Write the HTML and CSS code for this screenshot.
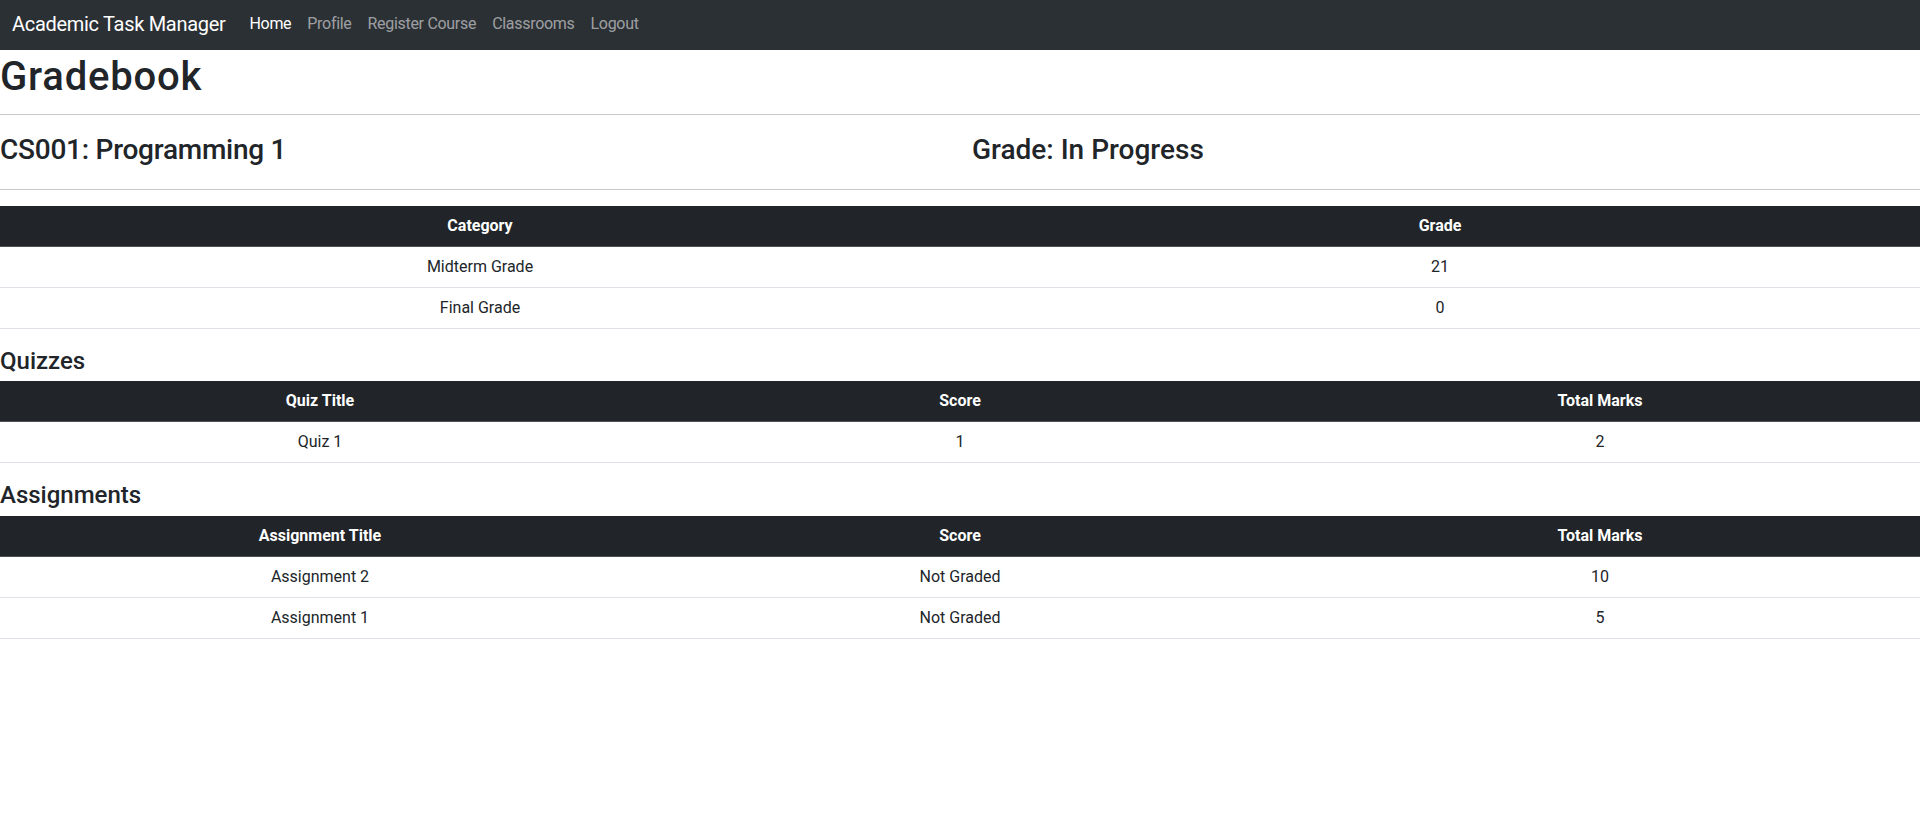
FILE: index.html
```html
<!DOCTYPE html>
<html lang="en">
<head>
<meta charset="utf-8">
<title>Gradebook - Academic Task Manager</title>
<link rel="stylesheet" href="styles.css">
</head>
<body>
<nav class="navbar">
  <div class="navbar-inner">
    <a class="brand" href="#">Academic Task Manager</a>
    <ul class="nav-list">
      <li><a class="nav-link active" href="#">Home</a></li>
      <li><a class="nav-link" href="#">Profile</a></li>
      <li><a class="nav-link" href="#">Register Course</a></li>
      <li><a class="nav-link" href="#">Classrooms</a></li>
      <li><a class="nav-link" href="#">Logout</a></li>
    </ul>
  </div>
</nav>
<main class="page">
  <h1 class="page-title">Gradebook</h1>
  <hr class="divider">
  <div class="summary-row">
    <div class="summary-col"><h3 class="summary-title course">CS001: Programming 1</h3></div>
    <div class="summary-col"><h3 class="summary-title">Grade: In Progress</h3></div>
  </div>
  <hr class="divider">
  <table class="grade-table">
    <thead>
      <tr><th>Category</th><th>Grade</th></tr>
    </thead>
    <tbody>
      <tr><td>Midterm Grade</td><td>21</td></tr>
      <tr><td>Final Grade</td><td>0</td></tr>
    </tbody>
  </table>
  <h4 class="section-title">Quizzes</h4>
  <table class="grade-table">
    <thead>
      <tr><th>Quiz Title</th><th>Score</th><th>Total Marks</th></tr>
    </thead>
    <tbody>
      <tr><td>Quiz 1</td><td>1</td><td>2</td></tr>
    </tbody>
  </table>
  <h4 class="section-title">Assignments</h4>
  <table class="grade-table">
    <thead>
      <tr><th>Assignment Title</th><th>Score</th><th>Total Marks</th></tr>
    </thead>
    <tbody>
      <tr><td>Assignment 2</td><td>Not Graded</td><td>10</td></tr>
      <tr><td>Assignment 1</td><td>Not Graded</td><td>5</td></tr>
    </tbody>
  </table>
</main>
</body>
</html>
```

FILE: styles.css
```css
* { box-sizing: border-box; }

html, body {
  margin: 0;
  padding: 0;
  background: #fff;
}

body {
  font-family: Roboto, "Noto Sans", "Liberation Sans", Arial, sans-serif;
  font-size: 16px;
  line-height: 1.5;
  color: #212529;
}

/* Navbar */
.navbar {
  background: #2b3035;
  padding: 4px 0 6px;
}

.navbar-inner {
  display: flex;
  align-items: center;
  padding: 0 12px;
}

.brand {
  font-size: 20px;
  line-height: 30px;
  padding: 5px 0;
  margin-right: 16px;
  color: #fff;
  text-decoration: none;
  letter-spacing: -0.3px;
}

.nav-list {
  display: flex;
  list-style: none;
  margin: 0;
  padding: 0;
}

.nav-link {
  display: block;
  padding: 8px;
  line-height: 24px;
  font-size: 16px;
  letter-spacing: -0.3px;
  color: rgba(255, 255, 255, 0.55);
  text-decoration: none;
}

.nav-link.active {
  color: #fff;
}

/* Page */
.page {
  padding: 0;
}

.page-title {
  font-size: 40px;
  font-weight: 500;
  line-height: 42px;
  padding-top: 6px;
  letter-spacing: 0.8px;
  margin: 0 0 8px;
}

.divider {
  margin: 16px 0;
  border: 0;
  border-top: 1px solid rgba(33, 37, 41, 0.25);
}

.summary-row {
  display: flex;
  margin: 0 -12px;
}

.summary-col {
  flex: 1 1 0;
  padding: 0 12px;
}

.summary-title {
  font-size: 28px;
  font-weight: 500;
  line-height: 29.6px;
  padding-top: 4px;
  margin: 0 0 8px;
}

.summary-title.course {
  letter-spacing: -0.25px;
}

.section-title {
  font-size: 24px;
  font-weight: 500;
  line-height: 24.8px;
  padding-top: 4px;
  margin: 0 0 8px;
}

/* Tables */
.grade-table {
  width: 100%;
  table-layout: fixed;
  border-collapse: collapse;
  margin-bottom: 16px;
  text-align: center;
}

.grade-table th,
.grade-table td {
  padding: 8px;
  line-height: 24px;
  border-bottom: 1px solid #dee2e6;
}

.grade-table thead th {
  background: #212529;
  color: #fff;
  font-weight: 700;
  border-bottom-color: #4d5154;
}
```
